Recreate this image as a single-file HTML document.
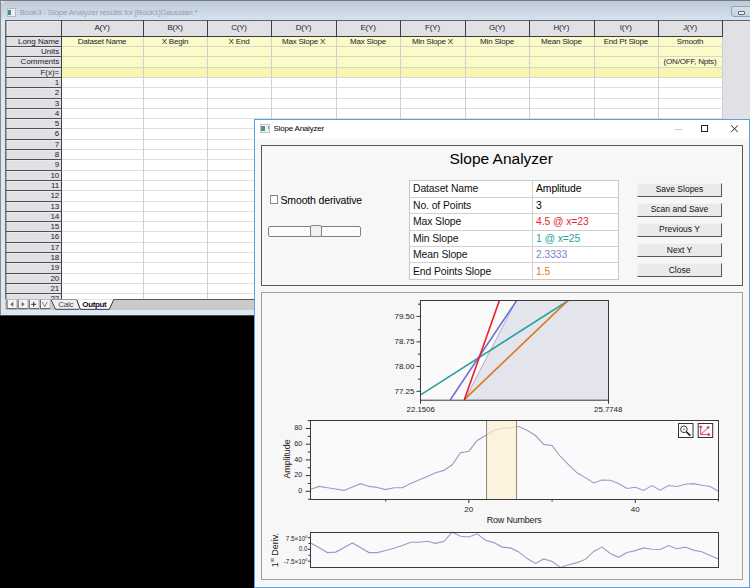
<!DOCTYPE html><html><head><meta charset="utf-8"><style>
*{box-sizing:border-box}
html,body{margin:0;padding:0;width:750px;height:588px;overflow:hidden;background:#000;font-family:"Liberation Sans", sans-serif;}
.abs{position:absolute}
.t{position:absolute;white-space:nowrap;line-height:1}

</style></head><body>
<div class="abs" style="left:0;top:0;width:750px;height:316px;background:#dbe7f3;border-top:1px solid #7a7a7a;border-left:1px solid #8a8a8a;"></div>
<div class="abs" style="left:0;top:315px;width:750px;height:1px;background:#4a4a4a"></div>
<div class="abs" style="left:1px;top:1px;width:749px;height:19px;background:linear-gradient(#bccad9,#d6e2ee);border-radius:5px 0 0 0"></div>
<div class="abs" style="left:6.5px;top:8px;width:9.5px;height:8.5px;background:#eef0f2;border:1px solid #b0b8c0;"></div>
<div class="abs" style="left:7.7px;top:9.6px;width:3.8px;height:5.2px;background:linear-gradient(#4f80b8,#3f9a5c);"></div>
<div class="t" style="left:19.8px;top:8.6px;font-size:8px;letter-spacing:-0.22px;color:#98a0aa">Book3 - Slope Analyzer results for [Book1]Gaussian *</div>
<div class="abs" style="left:731px;top:6px;width:22px;height:11px;border:1px solid #8ea2ba;border-radius:3px;background:linear-gradient(#d4e0ec,#c4d2e2)"></div>
<div class="abs" style="left:738px;top:11px;width:7px;height:4px;border:1px solid #606870;border-radius:1px;background:#f4f4f4"></div>
<div class="abs" style="left:5px;top:20px;width:745px;height:279px;background:#e1e0e5;border-left:1px solid #6e6e6e;border-top:1px solid #606060"></div>
<div class="abs" style="left:6px;top:21px;width:1px;height:278px;background:#a8a8a8"></div>
<div class="abs" style="left:7px;top:21px;width:54px;height:1px;background:#ebebef"></div>
<div class="abs" style="left:7px;top:21px;width:1px;height:15px;background:#ebebef"></div>
<div class="abs" style="left:62px;top:78.4px;width:660.0px;height:220.6px;background:#fff"></div>
<div class="abs" style="left:62px;top:37.2px;width:660.0px;height:30.9px;background:#fbfac9"></div>
<div class="abs" style="left:62px;top:68.1px;width:660.0px;height:10.3px;background:#f7f5b2"></div>
<div class="abs" style="left:62px;top:46px;width:660.0px;height:1px;background:#d8d8c6"></div>
<div class="abs" style="left:62px;top:56px;width:660.0px;height:1px;background:#d8d8c6"></div>
<div class="abs" style="left:62px;top:67px;width:660.0px;height:1px;background:#d8d8c6"></div>
<div class="abs" style="left:62px;top:77px;width:660.0px;height:1px;background:#d8d8c6"></div>
<div class="abs" style="left:62px;top:87px;width:660.0px;height:1px;background:#e0e0de"></div>
<div class="abs" style="left:62px;top:98px;width:660.0px;height:1px;background:#e0e0de"></div>
<div class="abs" style="left:62px;top:108px;width:660.0px;height:1px;background:#e0e0de"></div>
<div class="abs" style="left:62px;top:118px;width:660.0px;height:1px;background:#e0e0de"></div>
<div class="abs" style="left:62px;top:128px;width:660.0px;height:1px;background:#e0e0de"></div>
<div class="abs" style="left:62px;top:139px;width:660.0px;height:1px;background:#e0e0de"></div>
<div class="abs" style="left:62px;top:149px;width:660.0px;height:1px;background:#e0e0de"></div>
<div class="abs" style="left:62px;top:159px;width:660.0px;height:1px;background:#e0e0de"></div>
<div class="abs" style="left:62px;top:170px;width:660.0px;height:1px;background:#e0e0de"></div>
<div class="abs" style="left:62px;top:180px;width:660.0px;height:1px;background:#e0e0de"></div>
<div class="abs" style="left:62px;top:190px;width:660.0px;height:1px;background:#e0e0de"></div>
<div class="abs" style="left:62px;top:201px;width:660.0px;height:1px;background:#e0e0de"></div>
<div class="abs" style="left:62px;top:211px;width:660.0px;height:1px;background:#e0e0de"></div>
<div class="abs" style="left:62px;top:221px;width:660.0px;height:1px;background:#e0e0de"></div>
<div class="abs" style="left:62px;top:231px;width:660.0px;height:1px;background:#e0e0de"></div>
<div class="abs" style="left:62px;top:242px;width:660.0px;height:1px;background:#e0e0de"></div>
<div class="abs" style="left:62px;top:252px;width:660.0px;height:1px;background:#e0e0de"></div>
<div class="abs" style="left:62px;top:262px;width:660.0px;height:1px;background:#e0e0de"></div>
<div class="abs" style="left:62px;top:273px;width:660.0px;height:1px;background:#e0e0de"></div>
<div class="abs" style="left:62px;top:283px;width:660.0px;height:1px;background:#e0e0de"></div>
<div class="abs" style="left:62px;top:293px;width:660.0px;height:1px;background:#e0e0de"></div>
<div class="abs" style="left:143.0px;top:36.2px;width:1px;height:262.8px;background:#d0d0d0"></div>
<div class="abs" style="left:207.0px;top:36.2px;width:1px;height:262.8px;background:#d0d0d0"></div>
<div class="abs" style="left:271.0px;top:36.2px;width:1px;height:262.8px;background:#d0d0d0"></div>
<div class="abs" style="left:336.0px;top:36.2px;width:1px;height:262.8px;background:#d0d0d0"></div>
<div class="abs" style="left:400.0px;top:36.2px;width:1px;height:262.8px;background:#d0d0d0"></div>
<div class="abs" style="left:465.0px;top:36.2px;width:1px;height:262.8px;background:#d0d0d0"></div>
<div class="abs" style="left:529.0px;top:36.2px;width:1px;height:262.8px;background:#d0d0d0"></div>
<div class="abs" style="left:593.6px;top:36.2px;width:1px;height:262.8px;background:#d0d0d0"></div>
<div class="abs" style="left:658.0px;top:36.2px;width:1px;height:262.8px;background:#d0d0d0"></div>
<div class="abs" style="left:722.0px;top:36.2px;width:1px;height:262.8px;background:#d0d0d0"></div>
<div class="abs" style="left:61.0px;top:20px;width:1px;height:17.2px;background:#404040"></div>
<div class="abs" style="left:143.0px;top:20px;width:1px;height:17.2px;background:#404040"></div>
<div class="abs" style="left:207.0px;top:20px;width:1px;height:17.2px;background:#404040"></div>
<div class="abs" style="left:271.0px;top:20px;width:1px;height:17.2px;background:#404040"></div>
<div class="abs" style="left:336.0px;top:20px;width:1px;height:17.2px;background:#404040"></div>
<div class="abs" style="left:400.0px;top:20px;width:1px;height:17.2px;background:#404040"></div>
<div class="abs" style="left:465.0px;top:20px;width:1px;height:17.2px;background:#404040"></div>
<div class="abs" style="left:529.0px;top:20px;width:1px;height:17.2px;background:#404040"></div>
<div class="abs" style="left:593.6px;top:20px;width:1px;height:17.2px;background:#404040"></div>
<div class="abs" style="left:658.0px;top:20px;width:1px;height:17.2px;background:#404040"></div>
<div class="abs" style="left:722.0px;top:20px;width:1px;height:17.2px;background:#404040"></div>
<div class="abs" style="left:5px;top:36.2px;width:718.0px;height:1px;background:#3c3c3c"></div>
<div class="abs" style="left:61.0px;top:20px;width:1px;height:279.0px;background:#404040"></div>
<div class="abs" style="left:6px;top:46px;width:56.0px;height:1px;background:#505050"></div>
<div class="abs" style="left:7px;top:47px;width:54.0px;height:1px;background:#ebebef"></div>
<div class="abs" style="left:6px;top:56px;width:56.0px;height:1px;background:#505050"></div>
<div class="abs" style="left:7px;top:57px;width:54.0px;height:1px;background:#ebebef"></div>
<div class="abs" style="left:6px;top:67px;width:56.0px;height:1px;background:#505050"></div>
<div class="abs" style="left:7px;top:68px;width:54.0px;height:1px;background:#ebebef"></div>
<div class="abs" style="left:6px;top:77px;width:56.0px;height:1px;background:#505050"></div>
<div class="abs" style="left:7px;top:78px;width:54.0px;height:1px;background:#ebebef"></div>
<div class="abs" style="left:6px;top:87px;width:56.0px;height:1px;background:#505050"></div>
<div class="abs" style="left:7px;top:88px;width:54.0px;height:1px;background:#ebebef"></div>
<div class="abs" style="left:6px;top:98px;width:56.0px;height:1px;background:#505050"></div>
<div class="abs" style="left:7px;top:99px;width:54.0px;height:1px;background:#ebebef"></div>
<div class="abs" style="left:6px;top:108px;width:56.0px;height:1px;background:#505050"></div>
<div class="abs" style="left:7px;top:109px;width:54.0px;height:1px;background:#ebebef"></div>
<div class="abs" style="left:6px;top:118px;width:56.0px;height:1px;background:#505050"></div>
<div class="abs" style="left:7px;top:119px;width:54.0px;height:1px;background:#ebebef"></div>
<div class="abs" style="left:6px;top:128px;width:56.0px;height:1px;background:#505050"></div>
<div class="abs" style="left:7px;top:129px;width:54.0px;height:1px;background:#ebebef"></div>
<div class="abs" style="left:6px;top:139px;width:56.0px;height:1px;background:#505050"></div>
<div class="abs" style="left:7px;top:140px;width:54.0px;height:1px;background:#ebebef"></div>
<div class="abs" style="left:6px;top:149px;width:56.0px;height:1px;background:#505050"></div>
<div class="abs" style="left:7px;top:150px;width:54.0px;height:1px;background:#ebebef"></div>
<div class="abs" style="left:6px;top:159px;width:56.0px;height:1px;background:#505050"></div>
<div class="abs" style="left:7px;top:160px;width:54.0px;height:1px;background:#ebebef"></div>
<div class="abs" style="left:6px;top:170px;width:56.0px;height:1px;background:#505050"></div>
<div class="abs" style="left:7px;top:171px;width:54.0px;height:1px;background:#ebebef"></div>
<div class="abs" style="left:6px;top:180px;width:56.0px;height:1px;background:#505050"></div>
<div class="abs" style="left:7px;top:181px;width:54.0px;height:1px;background:#ebebef"></div>
<div class="abs" style="left:6px;top:190px;width:56.0px;height:1px;background:#505050"></div>
<div class="abs" style="left:7px;top:191px;width:54.0px;height:1px;background:#ebebef"></div>
<div class="abs" style="left:6px;top:201px;width:56.0px;height:1px;background:#505050"></div>
<div class="abs" style="left:7px;top:202px;width:54.0px;height:1px;background:#ebebef"></div>
<div class="abs" style="left:6px;top:211px;width:56.0px;height:1px;background:#505050"></div>
<div class="abs" style="left:7px;top:212px;width:54.0px;height:1px;background:#ebebef"></div>
<div class="abs" style="left:6px;top:221px;width:56.0px;height:1px;background:#505050"></div>
<div class="abs" style="left:7px;top:222px;width:54.0px;height:1px;background:#ebebef"></div>
<div class="abs" style="left:6px;top:231px;width:56.0px;height:1px;background:#505050"></div>
<div class="abs" style="left:7px;top:232px;width:54.0px;height:1px;background:#ebebef"></div>
<div class="abs" style="left:6px;top:242px;width:56.0px;height:1px;background:#505050"></div>
<div class="abs" style="left:7px;top:243px;width:54.0px;height:1px;background:#ebebef"></div>
<div class="abs" style="left:6px;top:252px;width:56.0px;height:1px;background:#505050"></div>
<div class="abs" style="left:7px;top:253px;width:54.0px;height:1px;background:#ebebef"></div>
<div class="abs" style="left:6px;top:262px;width:56.0px;height:1px;background:#505050"></div>
<div class="abs" style="left:7px;top:263px;width:54.0px;height:1px;background:#ebebef"></div>
<div class="abs" style="left:6px;top:273px;width:56.0px;height:1px;background:#505050"></div>
<div class="abs" style="left:7px;top:274px;width:54.0px;height:1px;background:#ebebef"></div>
<div class="abs" style="left:6px;top:283px;width:56.0px;height:1px;background:#505050"></div>
<div class="abs" style="left:7px;top:284px;width:54.0px;height:1px;background:#ebebef"></div>
<div class="abs" style="left:6px;top:293px;width:56.0px;height:1px;background:#505050"></div>
<div class="abs" style="left:7px;top:294px;width:54.0px;height:1px;background:#ebebef"></div>
<div class="t" style="left:61.0px;width:82.0px;text-align:center;top:24.43px;font-size:8px;letter-spacing:-0.2px;color:#1c1c30">A(Y)</div>
<div class="t" style="left:61.0px;width:82.0px;text-align:center;top:37.83px;font-size:8px;letter-spacing:-0.2px;color:#1c1c30">Dataset Name</div>
<div class="t" style="left:143.0px;width:64.0px;text-align:center;top:24.43px;font-size:8px;letter-spacing:-0.2px;color:#1c1c30">B(X)</div>
<div class="t" style="left:143.0px;width:64.0px;text-align:center;top:37.83px;font-size:8px;letter-spacing:-0.2px;color:#1c1c30">X Begin</div>
<div class="t" style="left:207.0px;width:64.0px;text-align:center;top:24.43px;font-size:8px;letter-spacing:-0.2px;color:#1c1c30">C(Y)</div>
<div class="t" style="left:207.0px;width:64.0px;text-align:center;top:37.83px;font-size:8px;letter-spacing:-0.2px;color:#1c1c30">X End</div>
<div class="t" style="left:271.0px;width:65.0px;text-align:center;top:24.43px;font-size:8px;letter-spacing:-0.2px;color:#1c1c30">D(Y)</div>
<div class="t" style="left:271.0px;width:65.0px;text-align:center;top:37.83px;font-size:8px;letter-spacing:-0.2px;color:#1c1c30">Max Slope X</div>
<div class="t" style="left:336.0px;width:64.0px;text-align:center;top:24.43px;font-size:8px;letter-spacing:-0.2px;color:#1c1c30">E(Y)</div>
<div class="t" style="left:336.0px;width:64.0px;text-align:center;top:37.83px;font-size:8px;letter-spacing:-0.2px;color:#1c1c30">Max Slope</div>
<div class="t" style="left:400.0px;width:65.0px;text-align:center;top:24.43px;font-size:8px;letter-spacing:-0.2px;color:#1c1c30">F(Y)</div>
<div class="t" style="left:400.0px;width:65.0px;text-align:center;top:37.83px;font-size:8px;letter-spacing:-0.2px;color:#1c1c30">Min Slope X</div>
<div class="t" style="left:465.0px;width:64.0px;text-align:center;top:24.43px;font-size:8px;letter-spacing:-0.2px;color:#1c1c30">G(Y)</div>
<div class="t" style="left:465.0px;width:64.0px;text-align:center;top:37.83px;font-size:8px;letter-spacing:-0.2px;color:#1c1c30">Min Slope</div>
<div class="t" style="left:529.0px;width:64.6px;text-align:center;top:24.43px;font-size:8px;letter-spacing:-0.2px;color:#1c1c30">H(Y)</div>
<div class="t" style="left:529.0px;width:64.6px;text-align:center;top:37.83px;font-size:8px;letter-spacing:-0.2px;color:#1c1c30">Mean Slope</div>
<div class="t" style="left:593.6px;width:64.4px;text-align:center;top:24.43px;font-size:8px;letter-spacing:-0.2px;color:#1c1c30">I(Y)</div>
<div class="t" style="left:593.6px;width:64.4px;text-align:center;top:37.83px;font-size:8px;letter-spacing:-0.2px;color:#1c1c30">End Pt Slope</div>
<div class="t" style="left:658.0px;width:64.0px;text-align:center;top:24.43px;font-size:8px;letter-spacing:-0.2px;color:#1c1c30">J(Y)</div>
<div class="t" style="left:658.0px;width:64.0px;text-align:center;top:37.83px;font-size:8px;letter-spacing:-0.2px;color:#1c1c30">Smooth</div>
<div class="t" style="left:658.0px;width:64.0px;text-align:center;top:58.43px;font-size:8px;letter-spacing:-0.2px;color:#1c1c30">(ON/OFF, Npts)</div>
<div class="t" style="left:6px;width:53.3px;text-align:right;top:37.73px;font-size:8px;color:#1c1c30">Long Name</div>
<div class="t" style="left:6px;width:53.3px;text-align:right;top:48.03px;font-size:8px;color:#1c1c30">Units</div>
<div class="t" style="left:6px;width:53.3px;text-align:right;top:58.33px;font-size:8px;color:#1c1c30">Comments</div>
<div class="t" style="left:6px;width:53.3px;text-align:right;top:68.63px;font-size:8px;color:#1c1c30">F(x)=</div>
<div class="t" style="left:6px;width:53.3px;text-align:right;top:78.93px;font-size:8px;color:#1c1c30">1</div>
<div class="t" style="left:6px;width:53.3px;text-align:right;top:89.23px;font-size:8px;color:#1c1c30">2</div>
<div class="t" style="left:6px;width:53.3px;text-align:right;top:99.53px;font-size:8px;color:#1c1c30">3</div>
<div class="t" style="left:6px;width:53.3px;text-align:right;top:109.83px;font-size:8px;color:#1c1c30">4</div>
<div class="t" style="left:6px;width:53.3px;text-align:right;top:120.13px;font-size:8px;color:#1c1c30">5</div>
<div class="t" style="left:6px;width:53.3px;text-align:right;top:130.43px;font-size:8px;color:#1c1c30">6</div>
<div class="t" style="left:6px;width:53.3px;text-align:right;top:140.73px;font-size:8px;color:#1c1c30">7</div>
<div class="t" style="left:6px;width:53.3px;text-align:right;top:151.03px;font-size:8px;color:#1c1c30">8</div>
<div class="t" style="left:6px;width:53.3px;text-align:right;top:161.33px;font-size:8px;color:#1c1c30">9</div>
<div class="t" style="left:6px;width:53.3px;text-align:right;top:171.63px;font-size:8px;color:#1c1c30">10</div>
<div class="t" style="left:6px;width:53.3px;text-align:right;top:181.93px;font-size:8px;color:#1c1c30">11</div>
<div class="t" style="left:6px;width:53.3px;text-align:right;top:192.23px;font-size:8px;color:#1c1c30">12</div>
<div class="t" style="left:6px;width:53.3px;text-align:right;top:202.53px;font-size:8px;color:#1c1c30">13</div>
<div class="t" style="left:6px;width:53.3px;text-align:right;top:212.83px;font-size:8px;color:#1c1c30">14</div>
<div class="t" style="left:6px;width:53.3px;text-align:right;top:223.13px;font-size:8px;color:#1c1c30">15</div>
<div class="t" style="left:6px;width:53.3px;text-align:right;top:233.43px;font-size:8px;color:#1c1c30">16</div>
<div class="t" style="left:6px;width:53.3px;text-align:right;top:243.73px;font-size:8px;color:#1c1c30">17</div>
<div class="t" style="left:6px;width:53.3px;text-align:right;top:254.03px;font-size:8px;color:#1c1c30">18</div>
<div class="t" style="left:6px;width:53.3px;text-align:right;top:264.33px;font-size:8px;color:#1c1c30">19</div>
<div class="t" style="left:6px;width:53.3px;text-align:right;top:274.63px;font-size:8px;color:#1c1c30">20</div>
<div class="t" style="left:6px;width:53.3px;text-align:right;top:284.93px;font-size:8px;color:#1c1c30">21</div>
<div class="t" style="left:6px;width:53.3px;text-align:right;top:295.23px;font-size:8px;color:#1c1c30">22</div>
<div class="abs" style="left:5px;top:299px;width:745px;height:10.5px;background:#cacaca"></div>
<svg class="abs" style="left:0;top:290px" width="260" height="30" viewBox="0 290 260 30"><rect x="6.50" y="299" width="10.6" height="10.2" fill="#f5f5f5"/><path d="M7.00 299.3V308.7H17.00" stroke="#4a4a4a" stroke-width="1" fill="none"/><path d="M7.50 299.5H16.80V308.3" stroke="#b0b0b0" stroke-width="0.8" fill="none"/><rect x="17.60" y="299" width="10.6" height="10.2" fill="#f5f5f5"/><path d="M18.10 299.3V308.7H28.10" stroke="#4a4a4a" stroke-width="1" fill="none"/><path d="M18.60 299.5H27.90V308.3" stroke="#b0b0b0" stroke-width="0.8" fill="none"/><rect x="28.70" y="299" width="10.6" height="10.2" fill="#f5f5f5"/><path d="M29.20 299.3V308.7H39.20" stroke="#4a4a4a" stroke-width="1" fill="none"/><path d="M29.70 299.5H39.00V308.3" stroke="#b0b0b0" stroke-width="0.8" fill="none"/><rect x="39.80" y="299" width="10.6" height="10.2" fill="#f5f5f5"/><path d="M40.30 299.3V308.7H50.30" stroke="#4a4a4a" stroke-width="1" fill="none"/><path d="M40.80 299.5H50.10V308.3" stroke="#b0b0b0" stroke-width="0.8" fill="none"/><polygon points="10.3,304.3 13.3,301.8 13.3,306.8" fill="#6a6a6a"/><polygon points="24.6,304.3 21.6,301.8 21.6,306.8" fill="#6a6a6a"/><path d="M31.2 304.3H36.2M33.7 301.8V306.8" stroke="#222" stroke-width="0.9"/><path d="M42.3 301.8L44.8 306.8L47.3 301.8" stroke="#777" stroke-width="0.9" fill="none"/><line x1="113.5" y1="299.5" x2="260" y2="299.5" stroke="#555" stroke-width="1"/><polygon points="51,299.5 76,299.5 79,309.3 55.5,309.3" fill="#efefef"/><polyline points="51,299.5 55.5,309.3 79,309.3" fill="none" stroke="#333" stroke-width="0.9"/><line x1="51" y1="299.5" x2="76" y2="299.5" stroke="#888" stroke-width="0.8"/><polygon points="77,299.5 113.8,299.5 109.3,309.3 80.5,309.3" fill="#ffffff"/><polyline points="76.8,299.8 80.3,309.3 109.3,309.3 113.8,299.5" fill="none" stroke="#222" stroke-width="0.9"/></svg>
<div class="t" style="left:58.3px;top:300.83px;font-size:8px;letter-spacing:-0.3px;color:#34446a">Calc</div>
<div class="t" style="left:82.3px;top:300.83px;font-size:8px;font-weight:bold;letter-spacing:-0.35px;color:#0c0c20">Output</div>
<div class="abs" style="left:254px;top:119px;width:496px;height:469px;background:#f7f7f7;border:1px solid #55a0e6"></div>
<div class="abs" style="left:255px;top:120px;width:494px;height:19px;background:#fff"></div>
<div class="t" style="left:273.6px;top:125.43px;font-size:8px;letter-spacing:-0.22px;color:#000">Slope Analyzer</div>
<div class="abs" style="left:261px;top:145px;width:482px;height:141px;border:1px solid #585858;border-right-color:#585858;"></div>
<div class="t" style="left:449.5px;top:151.48px;font-size:15.5px;color:#000">Slope Analyzer</div>
<div class="abs" style="left:261px;top:292px;width:482px;height:288px;border:1px solid #a0a0a0;"></div>
<div class="abs" style="left:260px;top:124.2px;width:10px;height:9px;background:#f2f2f2;border:1px solid #c4c4c4;"></div>
<div class="abs" style="left:261.2px;top:126.0px;width:4px;height:5.4px;background:linear-gradient(#5a88c0,#45a060);"></div>
<div class="abs" style="left:268px;top:126.0px;width:1.2px;height:3px;background:linear-gradient(#6a98c8,#60b060);"></div>
<div class="abs" style="left:675px;top:128.5px;width:7px;height:1px;background:#c8c8c8"></div>
<div class="abs" style="left:701.3px;top:125px;width:7px;height:7px;border:1px solid #222"></div>
<svg class="abs" style="left:730px;top:124px" width="10" height="10" viewBox="0 0 10 10"><path d="M1.2 1.5L7.8 8M7.8 1.5L1.2 8" stroke="#222" stroke-width="1" fill="none"/></svg>
<div class="abs" style="left:269.5px;top:195px;width:8.5px;height:8.5px;border:1px solid #8a8a8a;background:#fff"></div>
<div class="t" style="left:280.5px;top:194.5px;font-size:10.5px;letter-spacing:-0.15px;color:#000">Smooth derivative</div>
<div class="abs" style="left:268px;top:226px;width:92.5px;height:10.5px;border:1px solid #808080;border-radius:2px;background:#fcfcfc"></div>
<div class="abs" style="left:310px;top:225px;width:11.5px;height:11.5px;border:1px solid #858585;border-radius:2px;background:#f0f0f0"></div>
<div class="abs" style="left:409px;top:180px;width:210px;height:100px;background:#fff;border:1px solid #c8c8c8"></div>
<div class="abs" style="left:532px;top:180px;width:1px;height:100px;background:#d0d0d0"></div>
<div class="abs" style="left:409px;top:197px;width:210px;height:1px;background:#d0d0d0"></div>
<div class="abs" style="left:409px;top:213px;width:210px;height:1px;background:#d0d0d0"></div>
<div class="abs" style="left:409px;top:230px;width:210px;height:1px;background:#d0d0d0"></div>
<div class="abs" style="left:409px;top:246px;width:210px;height:1px;background:#d0d0d0"></div>
<div class="abs" style="left:409px;top:262px;width:210px;height:1px;background:#d0d0d0"></div>
<div class="t" style="left:413px;top:184.00px;font-size:10.4px;letter-spacing:-0.1px;color:#111">Dataset Name</div>
<div class="t" style="left:536px;top:184.00px;font-size:10.4px;letter-spacing:-0.1px;color:#000">Amplitude</div>
<div class="t" style="left:413px;top:200.50px;font-size:10.4px;letter-spacing:-0.1px;color:#111">No. of Points</div>
<div class="t" style="left:536px;top:200.50px;font-size:10.4px;letter-spacing:-0.1px;color:#000">3</div>
<div class="t" style="left:413px;top:217.00px;font-size:10.4px;letter-spacing:-0.1px;color:#111">Max Slope</div>
<div class="t" style="left:536px;top:217.00px;font-size:10.4px;letter-spacing:-0.1px;color:#e8262e">4.5 @ x=23</div>
<div class="t" style="left:413px;top:233.50px;font-size:10.4px;letter-spacing:-0.1px;color:#111">Min Slope</div>
<div class="t" style="left:536px;top:233.50px;font-size:10.4px;letter-spacing:-0.1px;color:#1ea2a0">1 @ x=25</div>
<div class="t" style="left:413px;top:250.00px;font-size:10.4px;letter-spacing:-0.1px;color:#111">Mean Slope</div>
<div class="t" style="left:536px;top:250.00px;font-size:10.4px;letter-spacing:-0.1px;color:#8282d2">2.3333</div>
<div class="t" style="left:413px;top:266.50px;font-size:10.4px;letter-spacing:-0.1px;color:#111">End Points Slope</div>
<div class="t" style="left:536px;top:266.50px;font-size:10.4px;letter-spacing:-0.1px;color:#e07a28">1.5</div>
<div class="abs" style="left:636.5px;top:182.6px;width:85.5px;height:14px;background:#eaeaea;border-top:1px solid #f4f4f4;border-left:1px solid #f4f4f4;border-right:1px solid #585858;border-bottom:1px solid #585858"></div>
<div class="t" style="left:637px;width:85px;text-align:center;top:185.2px;font-size:8.5px;color:#111">Save Slopes</div>
<div class="abs" style="left:636.5px;top:202.7px;width:85.5px;height:14px;background:#eaeaea;border-top:1px solid #f4f4f4;border-left:1px solid #f4f4f4;border-right:1px solid #585858;border-bottom:1px solid #585858"></div>
<div class="t" style="left:637px;width:85px;text-align:center;top:205.3px;font-size:8.5px;color:#111">Scan and Save</div>
<div class="abs" style="left:636.5px;top:222.8px;width:85.5px;height:14px;background:#eaeaea;border-top:1px solid #f4f4f4;border-left:1px solid #f4f4f4;border-right:1px solid #585858;border-bottom:1px solid #585858"></div>
<div class="t" style="left:637px;width:85px;text-align:center;top:225.4px;font-size:8.5px;color:#111">Previous Y</div>
<div class="abs" style="left:636.5px;top:242.9px;width:85.5px;height:14px;background:#eaeaea;border-top:1px solid #f4f4f4;border-left:1px solid #f4f4f4;border-right:1px solid #585858;border-bottom:1px solid #585858"></div>
<div class="t" style="left:637px;width:85px;text-align:center;top:245.5px;font-size:8.5px;color:#111">Next Y</div>
<div class="abs" style="left:636.5px;top:263.0px;width:85.5px;height:14px;background:#eaeaea;border-top:1px solid #f4f4f4;border-left:1px solid #f4f4f4;border-right:1px solid #585858;border-bottom:1px solid #585858"></div>
<div class="t" style="left:637px;width:85px;text-align:center;top:265.6px;font-size:8.5px;color:#111">Close</div>
<svg class="abs" style="left:0;top:0" width="750" height="588" viewBox="0 0 750 588"><rect x="420.5" y="300.5" width="188.0" height="99.69999999999999" fill="#fafafa"/><polygon points="464.5,400.2 516.3,300.5 608.5,300.5 608.5,400.2" fill="#e4e4ed"/><line x1="464.5" y1="400.2" x2="516.3" y2="300.5" stroke="#9c9cc8" stroke-width="0.8"/><defs><clipPath id="c1"><rect x="420.5" y="300.5" width="188.0" height="99.69999999999999"/></clipPath></defs><g clip-path="url(#c1)" stroke-width="1.6" fill="none"><line x1="420.6" y1="394.8" x2="568.3" y2="300.6" stroke="#21a39f"/><line x1="464.3" y1="399.7" x2="567.8" y2="300.6" stroke="#d97a22"/><line x1="450.3" y1="399.7" x2="516.6" y2="300.6" stroke="#7272d0"/><line x1="464.3" y1="399.7" x2="499.4" y2="300.6" stroke="#ea1e2a"/></g><rect x="420.5" y="300.5" width="188.0" height="99.69999999999999" fill="none" stroke="#3a3a3a" stroke-width="1"/><line x1="416.5" y1="316.4" x2="420.5" y2="316.4" stroke="#333" stroke-width="1"/><line x1="416.5" y1="341.9" x2="420.5" y2="341.9" stroke="#333" stroke-width="1"/><line x1="416.5" y1="366.4" x2="420.5" y2="366.4" stroke="#333" stroke-width="1"/><line x1="416.5" y1="391.3" x2="420.5" y2="391.3" stroke="#333" stroke-width="1"/><line x1="418.0" y1="304.2" x2="420.5" y2="304.2" stroke="#333" stroke-width="1"/><line x1="418.0" y1="329.7" x2="420.5" y2="329.7" stroke="#333" stroke-width="1"/><line x1="418.0" y1="354.2" x2="420.5" y2="354.2" stroke="#333" stroke-width="1"/><line x1="418.0" y1="379.1" x2="420.5" y2="379.1" stroke="#333" stroke-width="1"/><line x1="420.5" y1="400.2" x2="420.5" y2="403.7" stroke="#333" stroke-width="1"/><line x1="608.5" y1="400.2" x2="608.5" y2="403.7" stroke="#333" stroke-width="1"/><rect x="310.5" y="420.5" width="408.0" height="79.0" fill="#fafafa"/><polyline points="310.80,489.2 319.12,486.4 327.44,487.8 335.76,489.0 344.08,490.4 352.40,487.0 360.72,483.7 369.04,486.4 377.36,487.5 385.68,489.6 394.00,487.7 402.32,487.7 410.64,483.5 418.96,480.0 427.28,476.5 435.60,472.8 443.92,470.4 452.24,464.8 460.56,452.8 468.88,451.2 477.20,440.5 485.52,435.5 493.84,430.5 502.16,428.2 510.48,427.8 518.80,426.5 527.12,430.2 535.44,435.5 543.76,444.4 552.08,445.4 560.40,456.5 568.72,464.8 577.04,472.8 585.36,477.6 593.68,482.9 602.00,480.0 610.32,480.3 618.64,483.5 626.96,488.5 635.28,487.2 643.60,490.4 651.92,485.6 660.24,490.2 668.56,485.5 676.88,486.5 685.20,484.3 693.52,483.6 701.84,485.3 710.16,486.5 718.48,491.3" fill="none" stroke="#9a9ac8" stroke-width="1.1"/><rect x="486.6" y="420.5" width="30" height="79.0" fill="#fcefd0" fill-opacity="0.68" stroke="#857a66" stroke-width="0.9"/><rect x="310.5" y="420.5" width="408.0" height="79.0" fill="none" stroke="#3a3a3a" stroke-width="1"/><line x1="305.7" y1="491.30" x2="310.5" y2="491.30" stroke="#333" stroke-width="1"/><line x1="307.7" y1="483.45" x2="310.5" y2="483.45" stroke="#333" stroke-width="1"/><line x1="305.7" y1="475.60" x2="310.5" y2="475.60" stroke="#333" stroke-width="1"/><line x1="307.7" y1="467.75" x2="310.5" y2="467.75" stroke="#333" stroke-width="1"/><line x1="305.7" y1="459.90" x2="310.5" y2="459.90" stroke="#333" stroke-width="1"/><line x1="307.7" y1="452.05" x2="310.5" y2="452.05" stroke="#333" stroke-width="1"/><line x1="305.7" y1="444.20" x2="310.5" y2="444.20" stroke="#333" stroke-width="1"/><line x1="307.7" y1="436.35" x2="310.5" y2="436.35" stroke="#333" stroke-width="1"/><line x1="305.7" y1="428.50" x2="310.5" y2="428.50" stroke="#333" stroke-width="1"/><line x1="307.7" y1="420.65" x2="310.5" y2="420.65" stroke="#333" stroke-width="1"/><line x1="308.0" y1="499.2" x2="310.5" y2="499.2" stroke="#333" stroke-width="1"/><line x1="385.68" y1="499.5" x2="385.68" y2="501.5" stroke="#333" stroke-width="1"/><line x1="468.88" y1="499.5" x2="468.88" y2="503.0" stroke="#333" stroke-width="1"/><line x1="552.08" y1="499.5" x2="552.08" y2="501.5" stroke="#333" stroke-width="1"/><line x1="635.28" y1="499.5" x2="635.28" y2="503.0" stroke="#333" stroke-width="1"/><line x1="718.48" y1="499.5" x2="718.48" y2="501.5" stroke="#333" stroke-width="1"/><rect x="678.5" y="423.5" width="14.5" height="14" fill="#fafafa" stroke="#333" stroke-width="1"/><circle cx="683.9" cy="429.3" r="3.3" fill="none" stroke="#222" stroke-width="0.9"/><circle cx="683.9" cy="429.3" r="0.8" fill="#444"/><line x1="686.3" y1="431.8" x2="690.3" y2="435.6" stroke="#111" stroke-width="1.5"/><rect x="698.2" y="423.5" width="14.5" height="14" fill="#fafafa" stroke="#333" stroke-width="1"/><g stroke="#ee3040" stroke-width="0.9" fill="#ee3040"><line x1="700.7" y1="427" x2="700.7" y2="434.6"/><line x1="700.7" y1="434.6" x2="708.6" y2="434.6"/><line x1="700.7" y1="434.6" x2="708" y2="427.6"/><circle cx="700.7" cy="426.8" r="0.9"/><circle cx="708.7" cy="434.6" r="1"/><circle cx="708.1" cy="427.4" r="0.9"/></g><rect x="310.5" y="532.5" width="408.0" height="35.0" fill="#fafafa"/><polyline points="310.80,543 319.12,547.8 327.44,552.6 335.76,552.1 344.08,547.5 352.40,543 360.72,547.8 369.04,552.6 377.36,552.6 385.68,550.5 394.00,548.2 402.32,545.5 410.64,542.3 418.96,542.3 427.28,541.3 435.60,543.4 443.92,541.3 452.24,532.2 460.56,536.2 468.88,537 477.20,533.8 485.52,540.2 493.84,542.6 502.16,547.1 510.48,547.9 518.80,551.9 527.12,558.6 535.44,563.4 543.76,558.9 552.08,561.5 560.40,567.4 568.72,564.7 577.04,562.6 585.36,559.4 593.68,551.4 602.00,547.1 610.32,553.5 618.64,557.3 626.96,552.5 635.28,550.6 643.60,547.9 651.92,549.3 660.24,549.5 668.56,545.5 676.88,548.7 685.20,547.1 693.52,550.1 701.84,551.7 710.16,555.4 718.48,558.9" fill="none" stroke="#9a9ac8" stroke-width="1.1"/><rect x="310.5" y="532.5" width="408.0" height="35.0" fill="none" stroke="#3a3a3a" stroke-width="1"/><line x1="308.0" y1="537.7" x2="310.5" y2="537.7" stroke="#333" stroke-width="1"/><line x1="308.5" y1="543.5" x2="310.5" y2="543.5" stroke="#333" stroke-width="1"/><line x1="308.0" y1="549.3" x2="310.5" y2="549.3" stroke="#333" stroke-width="1"/><line x1="308.5" y1="555.3" x2="310.5" y2="555.3" stroke="#333" stroke-width="1"/><line x1="308.0" y1="561.2" x2="310.5" y2="561.2" stroke="#333" stroke-width="1"/></svg>
<div class="t" style="right:335.50px;top:312.63px;font-size:8px;color:#222;">79.50</div>
<div class="t" style="right:335.50px;top:338.13px;font-size:8px;color:#222;">78.75</div>
<div class="t" style="right:335.50px;top:362.63px;font-size:8px;color:#222;">78.00</div>
<div class="t" style="right:335.50px;top:387.53px;font-size:8px;color:#222;">77.25</div>
<div class="t" style="left:370.70px;width:100px;text-align:center;top:406.40px;font-size:7.8px;color:#222;">22.1506</div>
<div class="t" style="left:558.20px;width:100px;text-align:center;top:406.40px;font-size:7.8px;color:#222;">25.7748</div>
<div class="t" style="right:447.60px;top:487.12px;font-size:7.3px;color:#222;">0</div>
<div class="t" style="right:447.60px;top:471.42px;font-size:7.3px;color:#222;">20</div>
<div class="t" style="right:447.60px;top:455.72px;font-size:7.3px;color:#222;">40</div>
<div class="t" style="right:447.60px;top:440.02px;font-size:7.3px;color:#222;">60</div>
<div class="t" style="right:447.60px;top:424.32px;font-size:7.3px;color:#222;">80</div>
<div class="t" style="left:418.70px;width:100px;text-align:center;top:505.93px;font-size:8px;color:#222;">20</div>
<div class="t" style="left:585.30px;width:100px;text-align:center;top:505.93px;font-size:8px;color:#222;">40</div>
<div class="t" style="left:486.70px;top:516.08px;font-size:9px;color:#222;letter-spacing:-0.2px">Row Numbers</div>
<div class="t" style="left:286.8px;top:459.3px;font-size:9px;letter-spacing:-0.1px;color:#222;transform:translate(-50%,-50%) rotate(-90deg)">Amplitude</div>
<div class="t" style="left:274.5px;top:550.4px;font-size:9px;color:#222;transform:translate(-50%,-50%) rotate(-90deg)">1<sup style="font-size:5px;vertical-align:4px">st</sup> Deriv.</div>
<div class="t" style="right:442.50px;top:534.87px;font-size:6.3px;color:#222;">7.5×10<sup style="font-size:4px;vertical-align:3px">0</sup></div>
<div class="t" style="right:442.50px;top:546.47px;font-size:6.3px;color:#222;">0.0</div>
<div class="t" style="right:442.50px;top:558.37px;font-size:6.3px;color:#222;">-7.5×10<sup style="font-size:4px;vertical-align:3px">0</sup></div>
</body></html>
